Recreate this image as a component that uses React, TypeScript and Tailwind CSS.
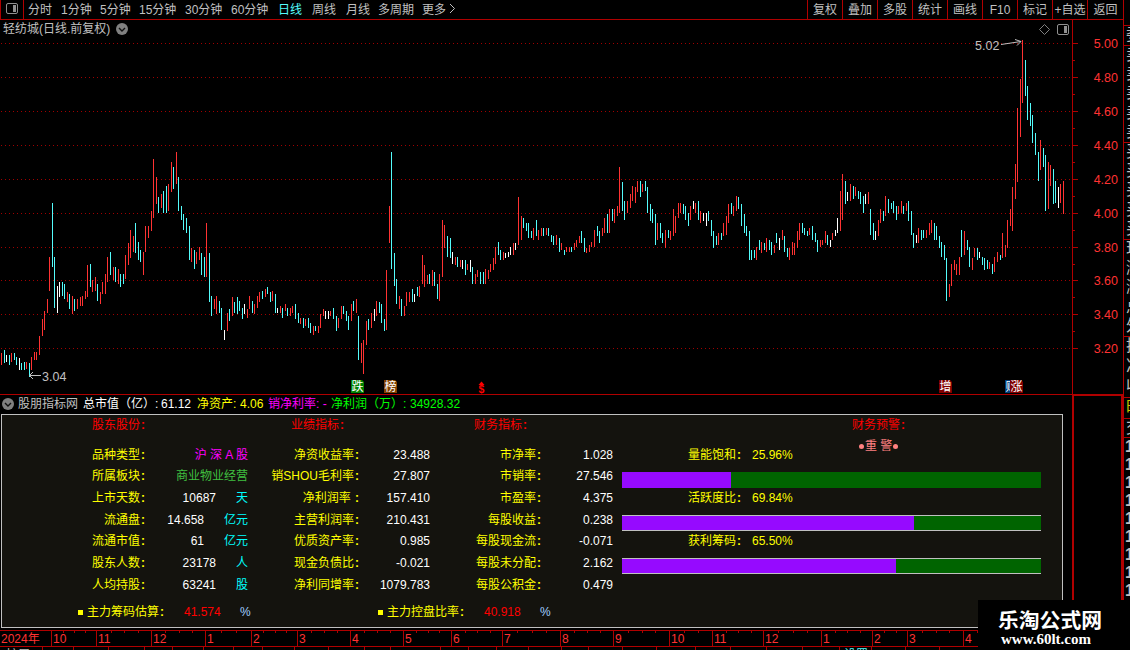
import type { ReactNode } from 'react'

// one entry per day: x, colour (r = up, c = down, w = flat), high-low in px
const BARS = `
1r353-365 4c350-363 6w355-362 9c355-365 11r353-362 14c353-360 16c357-365 19w358-370 21c363-370 24c362-370
26r362-369 29c363-377 31r357-370 34r352-360 36r352-360 39r336-355 42r319-336 44r311-330 47r299-313 49r257-291
52c203-267 54c257-308 57w286-313 59w282-297 62c282-296 64c284-299 67r292-302 69c294-309 72r296-314 74c299-311
77r299-309 80r297-306 82r296-306 85r291-299 87r265-297 90c264-287 92r280-292 95r277-291 97c284-301 100r292-304
102r282-294 105r274-294 107r257-282 110c252-275 113r267-280 115c267-282 118r269-284 120c274-287 123c274-284
125r255-279 128r243-265 130r230-258 133r236-252 135c223-253 138c242-260 140c250-262 143r252-275 145r226-252
148r226-238 151r211-231 153r159-218 156r177-204 158c197-213 161r194-208 163c191-213 166c186-213 168r184-211
171r162-192 173c167-189 176r152-184 178c177-211 181c206-220 183c214-230 186c218-233 189c226-260 191r248-262
194c250-269 196r252-264 199r247-260 201c253-275 204c257-277 206r223-277 209c253-302 211c296-316 214r299-309
216r296-314 219c301-313 221c308-330 224w330-340 227r313-331 229c309-321 232r297-316 234c302-313 237c297-314
239c301-311 242c308-319 244w304-314 247r309-318 249r296-309 252c301-313 254r304-314 257r296-308 259r292-302
262c291-299 265r289-297 267c287-294 270c292-302 272r291-301 275c294-313 277w308-313 280r306-313 282c308-318
285r304-311 287c308-316 290r308-316 292r306-313 295c304-319 298c313-323 300r318-324 303c318-328 305r319-326
308c318-328 310c323-333 313r326-335 315c326-331 318r326-333 320r314-328 323r309-316 325w311-319 328w311-319
330r311-316 333c308-319 336c316-331 338r318-328 341r306-319 343c306-314 346c311-321 348c316-330 351r304-321
353c301-311 356r299-313 358c316-360 361r343-363 363r340-374 366r321-345 368c319-330 371r313-328 374w309-321
376r301-316 379c302-313 381c304-323 384c319-331 386r270-330 389r206-243 391c152-269 394c253-286 396c279-304
399r296-309 401c299-316 404r306-316 406r292-306 409r292-302 412c289-302 414w294-302 417c287-296 419r286-297
422r255-284 424r265-287 427r275-284 429c274-284 432r270-286 434c272-286 437c284-299 439r274-301 442r220-277
444r225-248 447c236-257 450c238-258 452w252-264 455r257-265 457c257-267 460r260-267 462w260-269 465c260-275
467r264-270 470w260-272 472c267-284 475r274-284 477r270-277 480c272-284 483c272-284 485r269-284 488r270-279
490r264-272 493r258-270 495r247-264 498c242-255 500c250-260 503r252-260 505w253-258 508w252-257 510w247-255
513r243-255 515w243-250 518r197-245 521r216-240 523c218-228 526c223-231 528c223-238 531c231-238 533r228-240
536c220-236 538r230-240 541r228-236 543c228-236 546r228-235 548c228-236 551c235-242 553c236-245 556r235-245
559c238-252 561r243-250 564c250-255 566r247-252 569r247-252 571c247-252 574r243-250 576r240-247 579r236-243
581c231-243 584c238-252 586r248-253 589r245-252 591r242-247 594r230-247 597c226-236 599c231-243 602r228-236
604r218-233 607c214-233 609r209-233 612c209-221 614r209-223 617r206-216 619r167-213 622c182-211 624c201-220
627r201-213 630r194-208 632r186-201 635r187-203 637r181-192 640c181-197 642r184-192 645c181-191 647c187-213
650c204-221 652c209-223 655c214-245 657r223-240 660c223-238 662c233-243 665r230-248 668c230-238 670r231-240
673r209-236 675r216-233 678r203-218 680r203-213 683c204-214 685c206-220 688c213-226 690r206-220 693w201-209
695r203-213 698c201-220 700r211-223 703w213-221 706w213-226 708c211-221 711c220-236 713c231-248 716c236-245
718r233-245 721c233-240 723r223-236 726r216-235 728r204-223 731c203-214 733r206-216 736r196-211 738c197-209
741c204-226 744c214-233 746c226-236 749c231-260 751c250-260 754c250-258 756r247-260 759c240-250 761r242-253
764c243-250 766r238-252 769c240-250 771c242-255 774r245-253 776c233-243 779w238-250 782r230-240 784c236-252
787c248-257 789r248-260 792r242-255 794r243-255 797r231-248 799r223-240 802c223-233 804c228-235 807c231-236
809r228-235 812c226-240 815c233-242 817c240-252 820r240-247 822r240-245 825r231-243 827c235-245 830w240-247
832r233-240 835w230-236 837w218-233 840r191-231 842r174-220 845c181-204 847w192-201 850r184-201 853c186-199
855r187-196 858c191-199 860c192-204 863c196-213 865w194-204 868r192-204 870c209-235 873c223-240 875w231-240
878r220-236 880r209-223 883c211-221 885r196-216 888c199-213 891c203-209 893c201-213 896c206-220 898r206-214
901r201-213 903c206-214 906r203-211 908c201-221 911c211-235 913c233-248 916w235-243 918r228-243 921c230-240
923c230-238 926r230-238 929r223-235 931r220-233 934c223-240 936c226-240 939c236-248 941c242-257 944c245-260
946c258-301 949r284-297 951r264-286 954r260-270 956r264-275 959r257-275 961c230-257 964r231-255 967c240-250
969c247-267 972r258-270 974r248-257 977c248-260 979w252-258 982c257-265 984c258-270 987c260-269 989r262-269
992c264-274 994r257-272 997r252-262 1000c255-260 1002r233-258 1005r245-257 1007r220-248 1010r209-226
1012r187-231 1015r164-199 1017r108-182 1020r79-137 1022r40-103 1025c60-96 1027c86-120 1030c103-126
1032c115-143 1035c133-155 1038c152-181 1040r140-170 1043c148-167 1045c155-211 1048r162-209 1050r165-186
1053c169-204 1055c181-203 1058w187-208 1060r184-203 1063r181-214`
  .trim()
  .split(/\s+/)
  .map((s) => {
    const [, x, kind, top, bottom] = s.match(/(\d+)([rcw])(\d+)-(\d+)/)!
    return { x: +x, kind, top: +top, bottom: +bottom }
  })

const BAR_FILL: Record<string, string> = { r: '#ff3232', c: '#54fcfc', w: '#ffffff' }

const PRICES: [number, string][] = [
  [43, '5.00'],
  [77, '4.80'],
  [111, '4.60'],
  [145, '4.40'],
  [179, '4.20'],
  [213, '4.00'],
  [247, '3.80'],
  [280, '3.60'],
  [314, '3.40'],
  [348, '3.20'],
]

const PERIODS: [string, string][] = [
  ['分时', 'w-[33px]'],
  ['1分钟', 'w-[39px]'],
  ['5分钟', 'w-[39px]'],
  ['15分钟', 'w-[46px]'],
  ['30分钟', 'w-[46px]'],
  ['60分钟', 'w-[47px]'],
  ['日线', 'w-[34px] text-[#54fcfc]'],
  ['周线', 'w-[34px]'],
  ['月线', 'w-[32px]'],
  ['多周期', 'w-[44px]'],
  ['更多', 'w-[27px]'],
]

const TOOLS = ['复权', '叠加', '多股', '统计', '画线', 'F10', '标记', '+自选', '返回']

const SHARES: { label: string; value: string; unit?: string; color?: string }[] = [
  { label: '品种类型', value: '沪 深 A 股', color: 'text-[#ff00ff]' },
  { label: '所属板块', value: '商业物业经营', color: 'text-[#40c040]' },
  { label: '上市天数', value: '10687', unit: '天' },
  { label: '流通盘', value: '14.658', unit: '亿元' },
  { label: '流通市值', value: '61', unit: '亿元' },
  { label: '股东人数', value: '23178', unit: '人' },
  { label: '人均持股', value: '63241', unit: '股' },
]

const RESULTS = [
  ['净资收益率', '23.488'],
  ['销SHOU毛利率', '27.807'],
  ['净利润率 ', '157.410'],
  ['主营利润率', '210.431'],
  ['优质资产率', '0.985'],
  ['现金负债比', '-0.021'],
  ['净利同增率', '1079.783'],
]

const FINANCE = [
  ['市净率', '1.028'],
  ['市销率', '27.546'],
  ['市盈率', '4.375'],
  ['每股收益', '0.238'],
  ['每股现金流', '-0.071'],
  ['每股未分配', '2.162'],
  ['每股公积金', '0.479'],
]

const GAUGES = [
  { label: '量能饱和', value: '25.96%', fill: 109, framed: false },
  { label: '活跃度比', value: '69.84%', fill: 292, framed: true },
  { label: '获利筹码', value: '65.50%', fill: 274, framed: true },
]

const MONTHS: [string, number, number][] = [
  ['10', 45, 3],
  ['11', 55, 3],
  ['12', 54, 3],
  ['1', 46, 2],
  ['2', 46, 3],
  ['3', 53, 3],
  ['4', 53, 3],
  ['5', 48, 3],
  ['6', 51, 3],
  ['7', 58, 3],
  ['8', 53, 3],
  ['9', 56, 3],
  ['10', 43, 2],
  ['11', 51, 3],
  ['12', 58, 3],
  ['1', 51, 3],
  ['2', 35, 2],
  ['3', 56, 3],
  ['4', 40, 2],
]

const FOOT_CELLS = [31, 35, 36, 28, 31, 30, 29, 32, 34, 36, 26, 50, 28, 28, 32, 33, 27, 34, 34, 39, 35, 36, 36, 37, 32, 34, 34, 39]

export default function App() {
  return (
    <div className="relative flex h-[650px] w-[1130px] overflow-hidden bg-black font-['Liberation_Sans','Noto_Sans_CJK_SC',sans-serif] text-[12px] leading-[18px] whitespace-nowrap text-[#c0c0c0]">
      <main className="flex w-[1123px] shrink-0 flex-col">
        <Toolbar />
        <div className="flex h-[18px] w-[1073px] items-center border-r border-[#b00000] pl-[3px]">
          <span className="w-[113px] leading-[20px]">轻纺城(日线.前复权)</span>
          <ChevronDot />
          <svg width="11" height="11" viewBox="0 0 11 11" className="ml-auto" fill="none" stroke="#808080">
            <path d="M5.5 .5l5 5-5 5-5-5z" />
          </svg>
          <span className="mr-[3px] ml-[7px]">
            <LayoutIcon />
          </span>
        </div>
        <Chart />
        <div className="flex min-h-0 flex-1">
          <div className="flex w-[1072px] flex-col border-t border-[#b00000]">
            <IndicatorLine />
            <Panel />
            <TimeAxis />
          </div>
          <div className="flex-1 border-2 border-b-0 border-[#b00000]" />
        </div>
      </main>
      <QuoteStrip />
      <div className="absolute top-[600px] left-[978px] flex h-[50px] w-[152px] flex-col bg-black pt-[7px] text-white">
        <span className="pl-[20px] font-['Noto_Sans_CJK_SC',sans-serif] text-[20.8px] leading-[24px] font-bold">乐淘公式网</span>
        <span className="pl-[23px] font-['Liberation_Serif',serif] text-[15px] leading-[16px] font-bold">www.60lt.com</span>
      </div>
    </div>
  )
}

function Toolbar() {
  return (
    <nav className="flex h-[20px] border-b border-[#b00000] leading-[20px]">
      <span className="mr-[4px] flex w-[24px] items-center justify-center border-x border-[#b00000] pb-[2px]">
        <LayoutIcon />
      </span>
      {PERIODS.map(([name, cls]) => (
        <span key={name} className={cls}>
          {name}
        </span>
      ))}
      <svg width="7" height="11" viewBox="0 0 7 11" className="mt-[3px]" fill="none" stroke="#c0c0c0">
        <path d="M1 1l4.5 4.5L1 10" />
      </svg>
      <div className="ml-auto flex">
        {TOOLS.map((name, i) => (
          <span
            key={name}
            className={`border-l border-[#b00000] text-center ${i === TOOLS.length - 1 ? 'w-[36px]' : 'w-[35px]'}`}
          >
            {name}
          </span>
        ))}
      </div>
    </nav>
  )
}

function LayoutIcon() {
  return (
    <svg width="12" height="11" viewBox="0 0 12 11">
      <rect x=".5" y=".5" width="11" height="10" rx="1.5" fill="none" stroke="#909090" />
      <rect x="7" y="2" width="3" height="7" fill="#909090" />
    </svg>
  )
}

function ChevronDot() {
  return (
    <svg width="12" height="12" viewBox="0 0 12 12">
      <circle cx="6" cy="6" r="6" fill="#808080" />
      <path d="M3 5l3 3 3-3" fill="none" stroke="#101010" strokeWidth="1.4" />
    </svg>
  )
}

function Chart() {
  return (
    <svg width="1123" height="356" viewBox="0 38 1123 356" className="shrink-0">
      <g shapeRendering="crispEdges">
        {PRICES.map(([y]) => (
          <line key={y} x1="1" x2="1072" y1={y + 0.5} y2={y + 0.5} stroke="#a00000" strokeDasharray="1 3" />
        ))}
        <rect x="1072" y="38" width="1" height="356" fill="#b00000" />
        {PRICES.map(([y]) => (
          <g key={y} fill="#b00000">
            <rect x="1073" y={y} width="5" height="1" />
            {y < 340 && <rect x="1073" y={y + 17} width="2" height="1" />}
          </g>
        ))}
        {BARS.map((b) => (
          <rect key={b.x} x={b.x} y={b.top} width="1" height={b.bottom - b.top} fill={BAR_FILL[b.kind]} />
        ))}
      </g>
      <g fill="#ff3232" fontSize="12.5" textAnchor="end">
        {PRICES.map(([y, text]) => (
          <text key={y} x="1118" y={y + 5}>
            {text}
          </text>
        ))}
      </g>
      <g fill="#c0c0c0" fontSize="12.5">
        <text x="975" y="50">5.02</text>
        <text x="42" y="381">3.04</text>
      </g>
      <path d="M1001 44.5l20-3M1015 39.5l6 2-4 4M41 375.5H29.5M33 372l-3.5 3.5L33 379" fill="none" stroke="#c0c0c0" />
      <Flag x={351} fill="#008000" text="跌" />
      <Flag x={384} fill="#804000" text="榜" />
      <Flag x={939} fill="#800000" text="增" />
      <Flag x={1005} fill="#003c78" text="财" />
      <Flag x={1010} fill="#800000" text="涨" />
      <path d="M478.500 385h6l-3-3.500z" fill="#ff0000" />
      <text x="478.500" y="393" fontSize="10.5" fontWeight="bold" fill="#ff0000">
        $
      </text>
    </svg>
  )
}

function Flag({ x, fill, text }: { x: number; fill: string; text: string }) {
  return (
    <g>
      <path d={`M${x} 380h11l2 2v11h-13z`} fill={fill} />
      <text x={x + 0.5} y="391" fontSize="12" fill="#ffffff">
        {text}
      </text>
    </g>
  )
}

function IndicatorLine() {
  return (
    <div className="flex h-[19px] items-center pb-[2px] pl-[2px]">
      <ChevronDot />
      <span className="ml-[4px] w-[65px]">股朋指标网</span>
      <span className="w-[78px] text-white">总市值（亿）:</span>
      <span className="w-[36px] text-white">61.12</span>
      <span className="w-[43px] text-[#ffff00]">净资产:</span>
      <span className="w-[28px] text-[#ffff00]">4.06</span>
      <span className="w-[63px] text-[#ff00ff]">销净利率: -</span>
      <span className="w-[79px] text-[#00ff00]">净利润（万）:</span>
      <span className="text-[#00ff00]">34928.32</span>
    </div>
  )
}

// label followed by a colon that fills a full character cell
function Label({ text, className = '' }: { text: string; className?: string }) {
  return (
    <span className={`flex whitespace-pre ${className}`}>
      {text}
      <span className="w-[12px] pl-[1px] text-left font-bold">:</span>
    </span>
  )
}

function Column({ title, titleClass, className, children }: { title: string; titleClass: string; className: string; children: ReactNode }) {
  return (
    <section className={className}>
      <h3 className={`mb-[10px] pt-px text-[#ff0000] ${titleClass}`}>
        <Label text={title} />
      </h3>
      {children}
    </section>
  )
}

function Panel() {
  return (
    <div className="ml-[1px] flex h-[214px] w-[1062px] flex-col border border-[#c0c0c0] bg-[#14130e]">
      <div className="flex h-[188px]">
        <Column title="股东股份" titleClass="pl-[90px]" className="w-[246px]">
          {SHARES.map((r) => (
            <div key={r.label} className="flex h-[21.650px] items-center">
              <Label text={r.label} className="w-[150px] justify-end text-[#ffff00]" />
              <span className={`flex flex-1 justify-end gap-5 ${r.color ?? 'text-white'}`}>
                {r.value}
                {r.unit && <span className="text-[#00ffff]">{r.unit}</span>}
              </span>
            </div>
          ))}
        </Column>
        <Column title="业绩指标" titleClass="pl-[43px]" className="w-[182px]">
          {RESULTS.map(([label, value]) => (
            <Row key={label} label={label} value={value} />
          ))}
        </Column>
        <Column title="财务指标" titleClass="pl-[44px]" className="w-[183px]">
          {FINANCE.map(([label, value]) => (
            <Row key={label} label={label} value={value} />
          ))}
        </Column>
        <section className="ml-[9px] w-[419px]">
          <h3 className="h-[18px] pl-[230px] leading-[20px] text-[#ff0000]">
            <Label text="财务预警" />
          </h3>
          <p className="mt-[3px] flex h-[18px] items-center gap-[1px] pt-[2px] pl-[237px] text-[#ff8080]">
            <i className="size-[5px] rounded-full bg-[#ff8080]" />
            <span>重 警</span>
            <i className="size-[5px] rounded-full bg-[#ff8080]" />
          </p>
          <div className="-mt-[9px]">
            {GAUGES.map((g) => (
              <div key={g.label}>
                <p className="flex h-[18px] pl-[66px] leading-[20px] text-[#ffff00]">
                  <Label text={g.label} className="w-[64px]" />
                  {g.value}
                </p>
                <div className={`mt-[9px] h-[16px] bg-[#006400] ${g.framed ? 'border-y border-[#c0c0c0]' : ''}`}>
                  <div className="h-full bg-[#960aff]" style={{ width: g.fill }} />
                </div>
              </div>
            ))}
          </div>
        </section>
      </div>
      <div className="flex items-center">
        <Estimate className="ml-[76px] w-[300px]" label="主力筹码估算" value="41.574" />
        <Estimate className="w-[300px]" label="主力控盘比率" value="40.918" />
      </div>
    </div>
  )
}

function Row({ label, value }: { label: string; value: string }) {
  return (
    <div className="flex h-[21.650px] items-center justify-between">
      <Label text={label} className="w-[118px] justify-end text-[#ffff00]" />
      <span className="text-white">{value}</span>
    </div>
  )
}

function Estimate({ label, value, className }: { label: string; value: string; className: string }) {
  return (
    <div className={`flex items-center ${className}`}>
      <i className="mr-[4px] size-[5px] bg-[#ffff00]" />
      <Label text={label} className="w-[97px] text-[#ffff00]" />
      <span className="w-[56px] text-[#ff0000]">{value}</span>
      <span className="text-[#a0d0ff]">%</span>
    </div>
  )
}

function TimeAxis() {
  return (
    <>
      <div className="mt-[2px] flex h-[17px] shrink-0 border-y border-[#b00000] leading-[16px] text-[#ff3232]">
        <span className="w-[51px] shrink-0 pl-[1px]">2024年</span>
        {MONTHS.map(([name, width, ticks], i) => (
          <span key={i} className="flex shrink-0 border-l border-[#b00000] pl-px" style={{ width }}>
            <span className="w-0">{name}</span>
            <span className="flex h-[2px] flex-1 justify-evenly">
              {Array.from({ length: ticks }, (_, t) => (
                <i key={t} className="w-px bg-[#b00000]" />
              ))}
            </span>
          </span>
        ))}
      </div>
      <div className="flex h-[3px] overflow-hidden leading-[16px]">
        <span className="w-[42px] shrink-0 pl-[6px]">扩展</span>
        {FOOT_CELLS.map((width, i) => (
          <span key={i} className="shrink-0 border-l border-[#b00000] pl-[4px] text-[#54fcfc]" style={{ width }}>
            {i === 24 && '设置'}
          </span>
        ))}
      </div>
    </>
  )
}

function StripCell({ chars, className }: { chars: string; className: string }) {
  return (
    <div className={`flex flex-col overflow-hidden border-b border-[#b00000] pl-[2px] ${className}`}>
      {chars.split('').map((ch, i) => (
        <span key={i} className="min-h-0 flex-1">
          {ch}
        </span>
      ))}
    </div>
  )
}

function QuoteStrip() {
  return (
    <aside className="flex w-[7px] shrink-0 flex-col overflow-hidden border-l border-[#b00000] text-[16px]">
      <div className="h-[26px] shrink-0 border-b border-[#b00000]" />
      <StripCell chars="委" className="h-[20px] shrink-0" />
      <StripCell chars="卖卖卖卖卖" className="h-[97px] shrink-0" />
      <StripCell chars="买买买买买" className="h-[97px] shrink-0" />
      <StripCell chars="现涨涨总外" className="h-[97px] shrink-0" />
      <StripCell chars="换净收" className="h-[61px] shrink-0" />
      <StripCell chars="时" className="h-[21px] shrink-0 text-[#c8c800]" />
      <StripCell chars="交" className="h-[19px] shrink-0" />
      <div className="flex flex-col font-bold">
        {Array.from({ length: 9 }, (_, i) => (
          <span key={i} className="pl-[1px]">
            14
          </span>
        ))}
      </div>
    </aside>
  )
}
